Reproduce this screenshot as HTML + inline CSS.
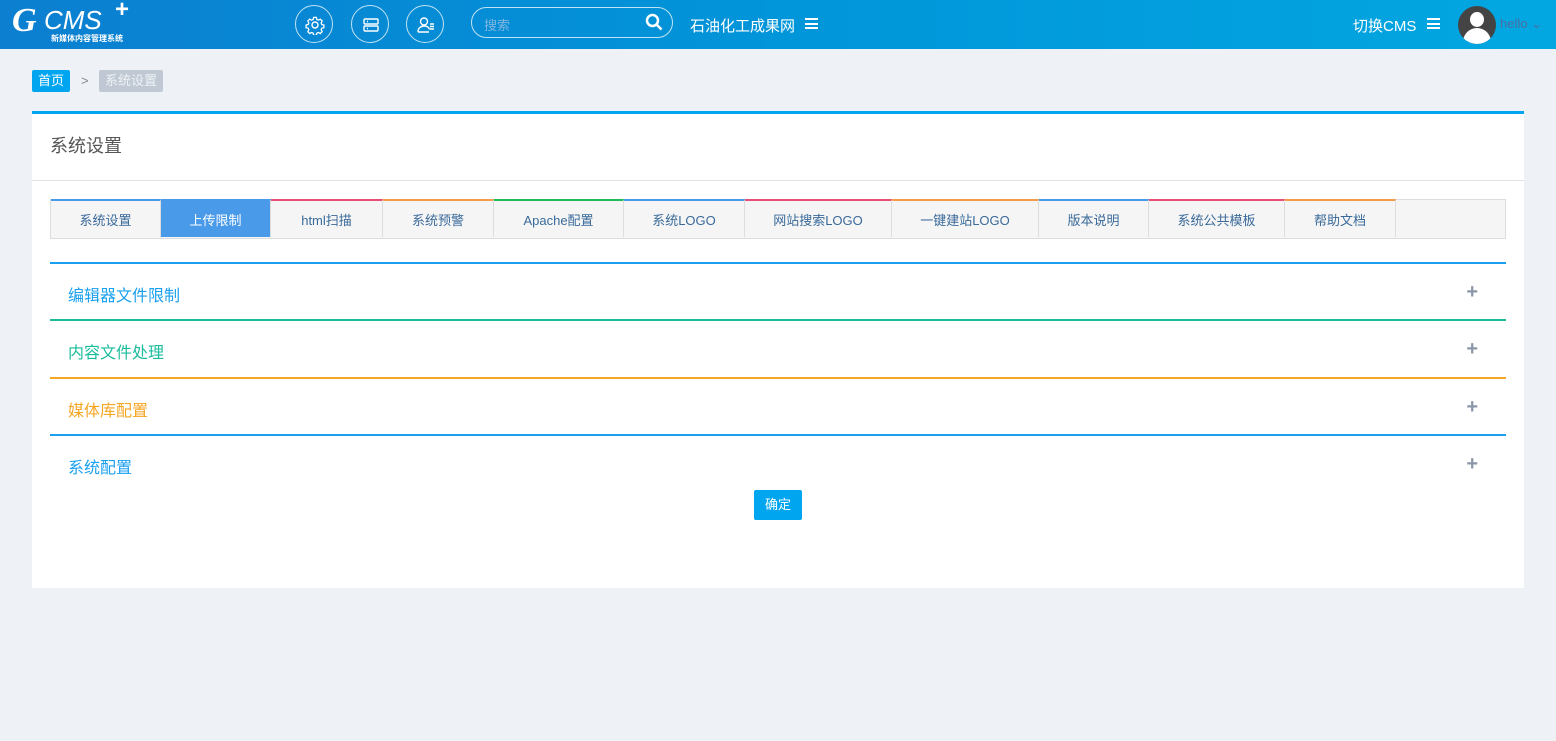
<!DOCTYPE html>
<html><head><meta charset="utf-8"><style>
*{margin:0;padding:0;box-sizing:border-box}
body{width:1556px;height:741px;background:#eef2f6;font-family:"Liberation Sans","Noto Sans CJK SC",sans-serif;position:relative;overflow:hidden}
.hdr{position:absolute;left:0;top:0;width:1556px;height:49px;background:linear-gradient(90deg,#0c7fd0,#0195d9 50%,#02a7e1)}
.circ{position:absolute;top:5px;width:38px;height:38px;border:1px solid rgba(255,255,255,.75);border-radius:50%}
.circ svg{position:absolute;left:9px;top:9px}
.search{position:absolute;left:471px;top:7px;width:202px;height:31px;border:1px solid rgba(255,255,255,.75);border-radius:16px;color:#7fb6e0;font-size:13px;padding:7px 12px}
.w{color:#fff;position:absolute}
.ham{position:absolute;width:13px;height:11px;border-top:2px solid #fff;border-bottom:2px solid #fff}
.ham:after{content:"";position:absolute;left:0;top:2.5px;width:13px;height:2px;background:#fff}
.bc1{position:absolute;left:32px;top:70px;height:22px;padding:0 6px;background:#00a5f0;color:#fff;font-size:13px;line-height:22px;border-radius:2px}
.bc2{position:absolute;left:99px;top:70px;height:22px;padding:0 6px;background:#c0c8d3;color:#eef2f6;font-size:13px;line-height:22px;border-radius:2px}
.panel{position:absolute;left:32px;top:111px;width:1492px;height:477px;background:#fff;border-top:3px solid #00a5f0}
.ptitle{position:absolute;left:18px;top:18px;font-size:18px;color:#555}
.pline{position:absolute;left:0;top:66px;width:1492px;height:1px;background:#e3e3e3}
.tabs{position:absolute;left:18px;top:85px;width:1456px;height:40px;background:#f5f5f5;border:1px solid #ddd;display:flex}
.tab{height:38px;border-right:1px solid #ddd;border-top:2px solid;font-size:13px;color:#3a6a9a;text-align:center;line-height:39px;margin-top:-1px}
.tab.act{background:#4a9aea;color:#fff;border-top-color:#4a9aea}
.sec{position:absolute;left:18px;width:1456px;height:57px;border-top:2px solid}
.sec span{position:absolute;left:18px;top:18px;font-size:16px}
.sec i{position:absolute;right:28px;top:17px;font-style:normal;color:#8a96a8;font-size:20px;font-weight:bold}
.btn{position:absolute;left:722px;top:376px;width:48px;height:30px;background:#00a5f0;color:#fff;font-size:13px;text-align:center;line-height:30px;border-radius:2px}
</style></head><body>
<div class="hdr">
 <div class="w" style="left:12px;top:2px;font-size:34px;font-style:italic;font-weight:bold;font-family:'Liberation Serif',serif">G</div>
 <div class="w" style="left:44px;top:5px;font-size:26px;font-style:italic">CMS</div>
 <div class="w" style="left:115px;top:-4px;font-size:24px;font-weight:bold">+</div>
 <div class="w" style="left:51px;top:33px;font-size:8px;font-weight:bold">新媒体内容管理系统</div>
 <div class="circ" style="left:295px"><svg width="20" height="20" viewBox="0 0 20 20" fill="none" stroke="#fff" stroke-width="1.4"><circle cx="10" cy="10" r="3"/><path d="M8.5 1.5h3l.5 2.3 1.8.9 2.1-1.2 2.1 2.1-1.2 2.1.8 1.8 2.3.5v3l-2.3.5-.8 1.8 1.2 2.1-2.1 2.1-2.1-1.2-1.8.8-.5 2.3h-3l-.5-2.3-1.8-.8-2.1 1.2-2.1-2.1 1.2-2.1-.8-1.8-2.3-.5v-3l2.3-.5.8-1.8-1.2-2.1 2.1-2.1 2.1 1.2 1.8-.9z" transform="scale(.9) translate(1.1 1.1)"/></svg></div>
 <div class="circ" style="left:351px"><svg width="20" height="20" viewBox="0 0 20 20" fill="none" stroke="#fff" stroke-width="1.4"><rect x="3" y="4" width="14" height="5" rx="1"/><rect x="3" y="11" width="14" height="5" rx="1"/><path d="M6 6.5h1M6 13.5h1"/></svg></div>
 <div class="circ" style="left:406px"><svg width="20" height="20" viewBox="0 0 20 20" fill="none" stroke="#fff" stroke-width="1.4"><circle cx="8" cy="6.5" r="3.5"/><path d="M2 17c0-4 3-6 6-6s5 1.5 5.5 3.5M2 17h11"/><path d="M14 9h4M14 11.5h4M14 14h4"/></svg></div>
 <div class="search">搜索</div>
 <svg style="position:absolute;left:645px;top:13px" width="18" height="18" viewBox="0 0 18 18" fill="none" stroke="#fff" stroke-width="2.5"><circle cx="7.5" cy="7.5" r="5.5"/><path d="M11.5 11.5l5 5"/></svg>
 <div class="w" style="left:690px;top:15px;font-size:15px">石油化工成果网</div>
 <div class="ham" style="left:805px;top:18px"></div>
 <div class="w" style="left:1353px;top:15px;font-size:15px">切换CMS</div>
 <div class="ham" style="left:1427px;top:18px"></div>
 <div style="position:absolute;left:1458px;top:6px;width:38px;height:38px;border-radius:50%;background:#444;overflow:hidden">
  <div style="position:absolute;left:12px;top:6px;width:14px;height:15px;border-radius:50%;background:#fff"></div>
  <div style="position:absolute;left:5px;top:22px;width:28px;height:20px;border-radius:14px 14px 0 0;background:#fff"></div>
 </div>
 <div style="position:absolute;left:1500px;top:16px;font-size:13px;color:#4a6ea0">hello ⌄</div>
</div>
<div class="bc1">首页</div>
<div style="position:absolute;left:81px;top:73px;color:#888;font-size:13px">&gt;</div>
<div class="bc2">系统设置</div>
<div class="panel">
 <div class="ptitle">系统设置</div>
 <div class="pline"></div>
 <div class="tabs">
  <div class="tab" style="width:110px;border-top-color:#4a9aea">系统设置</div>
  <div class="tab act" style="width:110px">上传限制</div>
  <div class="tab" style="width:112px;border-top-color:#e94e77">html扫描</div>
  <div class="tab" style="width:111px;border-top-color:#f39c4b">系统预警</div>
  <div class="tab" style="width:130px;border-top-color:#1ebd5a">Apache配置</div>
  <div class="tab" style="width:121px;border-top-color:#4a9aea">系统LOGO</div>
  <div class="tab" style="width:147px;border-top-color:#e94e77">网站搜索LOGO</div>
  <div class="tab" style="width:147px;border-top-color:#f39c4b">一键建站LOGO</div>
  <div class="tab" style="width:110px;border-top-color:#4a9aea">版本说明</div>
  <div class="tab" style="width:136px;border-top-color:#e94e77">系统公共模板</div>
  <div class="tab" style="width:111px;border-top-color:#f39c4b">帮助文档</div>
 </div>
 <div class="sec" style="top:148px;border-color:#1aa0ef"><span style="color:#1aa0ef">编辑器文件限制</span><i>+</i></div>
 <div class="sec" style="top:205px;border-color:#1abc9c"><span style="color:#1abc9c">内容文件处理</span><i>+</i></div>
 <div class="sec" style="top:263px;border-color:#f5a623"><span style="color:#f5a623">媒体库配置</span><i>+</i></div>
 <div class="sec" style="top:320px;border-color:#1aa0ef"><span style="color:#1aa0ef">系统配置</span><i>+</i></div>
 <div class="btn">确定</div>
</div>
</body></html>
